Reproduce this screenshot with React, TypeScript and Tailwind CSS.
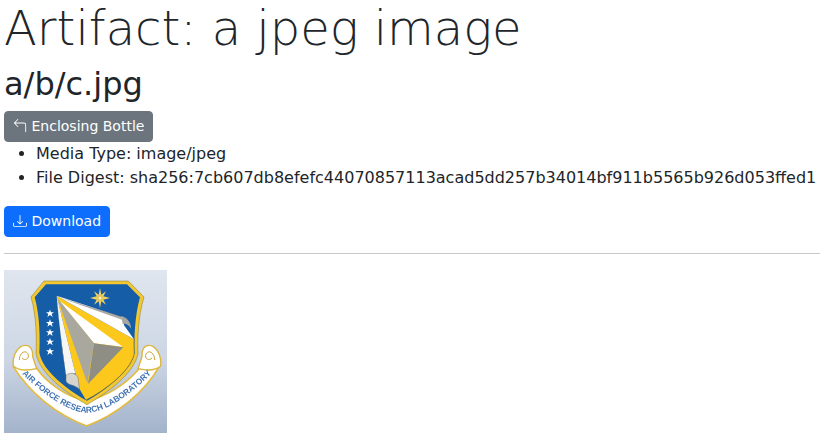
import { BsArrow90DegLeft, BsDownload } from 'react-icons/bs'

function AfrlLogo() {
  return (
    <svg viewBox="12 30 489 489" className="block h-[163px] w-[163px]">
      <defs>
        <linearGradient id="sky" x1="0" y1="0" x2="0" y2="1">
          <stop offset="0" stopColor="#e0e6ef" />
          <stop offset="0.55" stopColor="#ccd6e4" />
          <stop offset="1" stopColor="#a3b3cb" />
        </linearGradient>
        <filter id="soft">
          <feGaussianBlur stdDeviation="1.3" />
        </filter>
        <path id="ribbon-line" d="M66 341 C130 405 210 458 262 458 C314 458 405 400 480 312" />
      </defs>
      <rect x="12" y="30" width="489" height="489" fill="url(#sky)" />
      <g filter="url(#soft)">
        {/* ribbon */}
        <path
          d="M40 320 C90 400 170 464 260 498 C350 464 432 400 480 316 L440 292 L414 330 C370 380 310 410 261 424 C200 410 140 370 108 322 L76 300 Z"
          fill="#ffffff"
          stroke="#e3bb3e"
          strokeWidth="5"
        />
        {/* scrolls */}
        <path d="M40 318 C36 284 56 256 76 256 C92 256 100 272 98 290 L110 326 C84 332 58 334 40 318 Z" fill="#ffffff" stroke="#dcb53a" strokeWidth="4" />
        <path d="M58 300 C58 278 76 268 84 282 C90 296 74 304 66 294" fill="none" stroke="#c9a437" strokeWidth="3" />
        <path d="M482 318 C486 284 466 256 446 256 C432 256 424 272 426 290 L414 326 C440 332 464 334 482 318 Z" fill="#ffffff" stroke="#dcb53a" strokeWidth="4" />
        <path d="M464 300 C464 278 446 268 438 282 C432 296 448 304 456 294" fill="none" stroke="#c9a437" strokeWidth="3" />
        {/* shield */}
        <path
          d="M132 63 L385 63 L432 111 C414 170 412 240 414 280 C404 340 320 400 261 434 C200 400 118 340 108 280 C110 240 110 170 93 111 Z"
          fill="#f2c832"
          stroke="#8a7420"
          strokeWidth="1.5"
        />
        <path
          d="M138 73 L381 73 L420 112 C404 170 402 236 404 278 C394 334 316 390 261 422 C204 390 128 334 118 278 C120 236 120 170 104 112 Z"
          fill="#165da8"
        />
        {/* yellow field */}
        <path d="M170 107 L402 238 C402 262 404 270 402 284 C390 334 316 390 258 420 L238 386 L226 340 Z" fill="#fcc81e" />
        <path d="M402 236 C400 262 404 270 402 284 C390 334 316 390 258 420" fill="none" stroke="#6b5a1a" strokeWidth="1.5" />
        {/* plane */}
        <path d="M170 107 L368 172 L372 196 L402 238 Z" fill="#ffffff" />
        <path d="M176 112 L362 168 L368 180 Z" fill="#55564f" opacity="0.5" />
        <path d="M364 168 C380 172 392 186 394 206 C384 192 374 190 368 192 Z" fill="#a6a69f" />
        <path d="M178 122 L368 260 L282 250 Z" fill="#ffffff" />
        <path d="M172 114 L282 250 L262 370 Z" fill="#a9a89f" />
        <path d="M282 250 L370 262 L264 372 Z" fill="#8e8e85" />
        <path d="M170 107 L226 340 L198 346 C188 270 176 190 170 107 Z" fill="#f6f6f4" />
        <path d="M170 107 L186 270 L198 346 C188 270 176 190 170 107 Z" fill="#8d8d85" />
        <path d="M198 346 C210 336 226 338 234 352 L238 388 C222 372 206 378 198 364 Z" fill="#d5d5d0" stroke="#6f6f68" strokeWidth="1.5" />
        {/* star */}
        <path d="M300 84 L304 104 L318 94 L310 109 L330 114 L310 119 L318 134 L304 124 L300 144 L296 124 L282 134 L290 119 L270 114 L290 109 L282 94 L296 104 Z" fill="#efd063" />
        <circle cx="300" cy="114" r="10" fill="#e6c65a" />
        <circle cx="300" cy="114" r="4" fill="#fff6c4" />
        {[160, 189, 217, 245, 274].map((y) => (
          <path
            key={y}
            d={`M150 ${y - 11} L153 ${y - 3} L162 ${y - 3} L155 ${y + 2} L158 ${y + 11} L150 ${y + 5} L142 ${y + 11} L145 ${y + 2} L138 ${y - 3} L147 ${y - 3} Z`}
            fill="#ffffff"
          />
        ))}
        <text fontFamily="'Liberation Sans', sans-serif" fontSize="25" fill="#3f72b4" fontWeight="700">
          <textPath href="#ribbon-line" startOffset="0" textLength="462">
            AIR FORCE RESEARCH LABORATORY
          </textPath>
        </text>
      </g>
    </svg>
  )
}

export default function App() {
  return (
    <main className="pl-1 pb-[5px] font-['DejaVu_Sans',sans-serif] text-base leading-6 text-[#212529]">
      <h1 className="mb-2 text-5xl leading-[57px] font-light">Artifact: a jpeg image</h1>
      <h2 className="mb-2 text-[32px] leading-[38px] font-medium">a/b/c.jpg</h2>
      <a className="inline-flex h-[31px] items-center gap-[4.5px] rounded border border-[#6c757d] bg-[#6c757d] pr-[7.5px] pl-2 pb-[2px] text-sm text-white align-top">
        <BsArrow90DegLeft className="h-[14px] w-[14px]" />
        Enclosing Bottle
      </a>
      <ul className="mb-4 list-disc pl-8">
        <li>Media Type: image/jpeg</li>
        <li>File Digest: sha256:7cb607db8efefc44070857113acad5dd257b34014bf911b5565b926d053ffed1</li>
      </ul>
      <a className="inline-flex h-[31px] items-center gap-[4.5px] rounded border border-[#0d6efd] bg-[#0d6efd] pr-[7.5px] pl-2 pb-[2px] text-sm text-white align-top">
        <BsDownload className="h-[14px] w-[14px]" />
        Download
      </a>
      <hr className="my-4 border-t border-[#c8c9ca]" />
      <AfrlLogo />
    </main>
  )
}
